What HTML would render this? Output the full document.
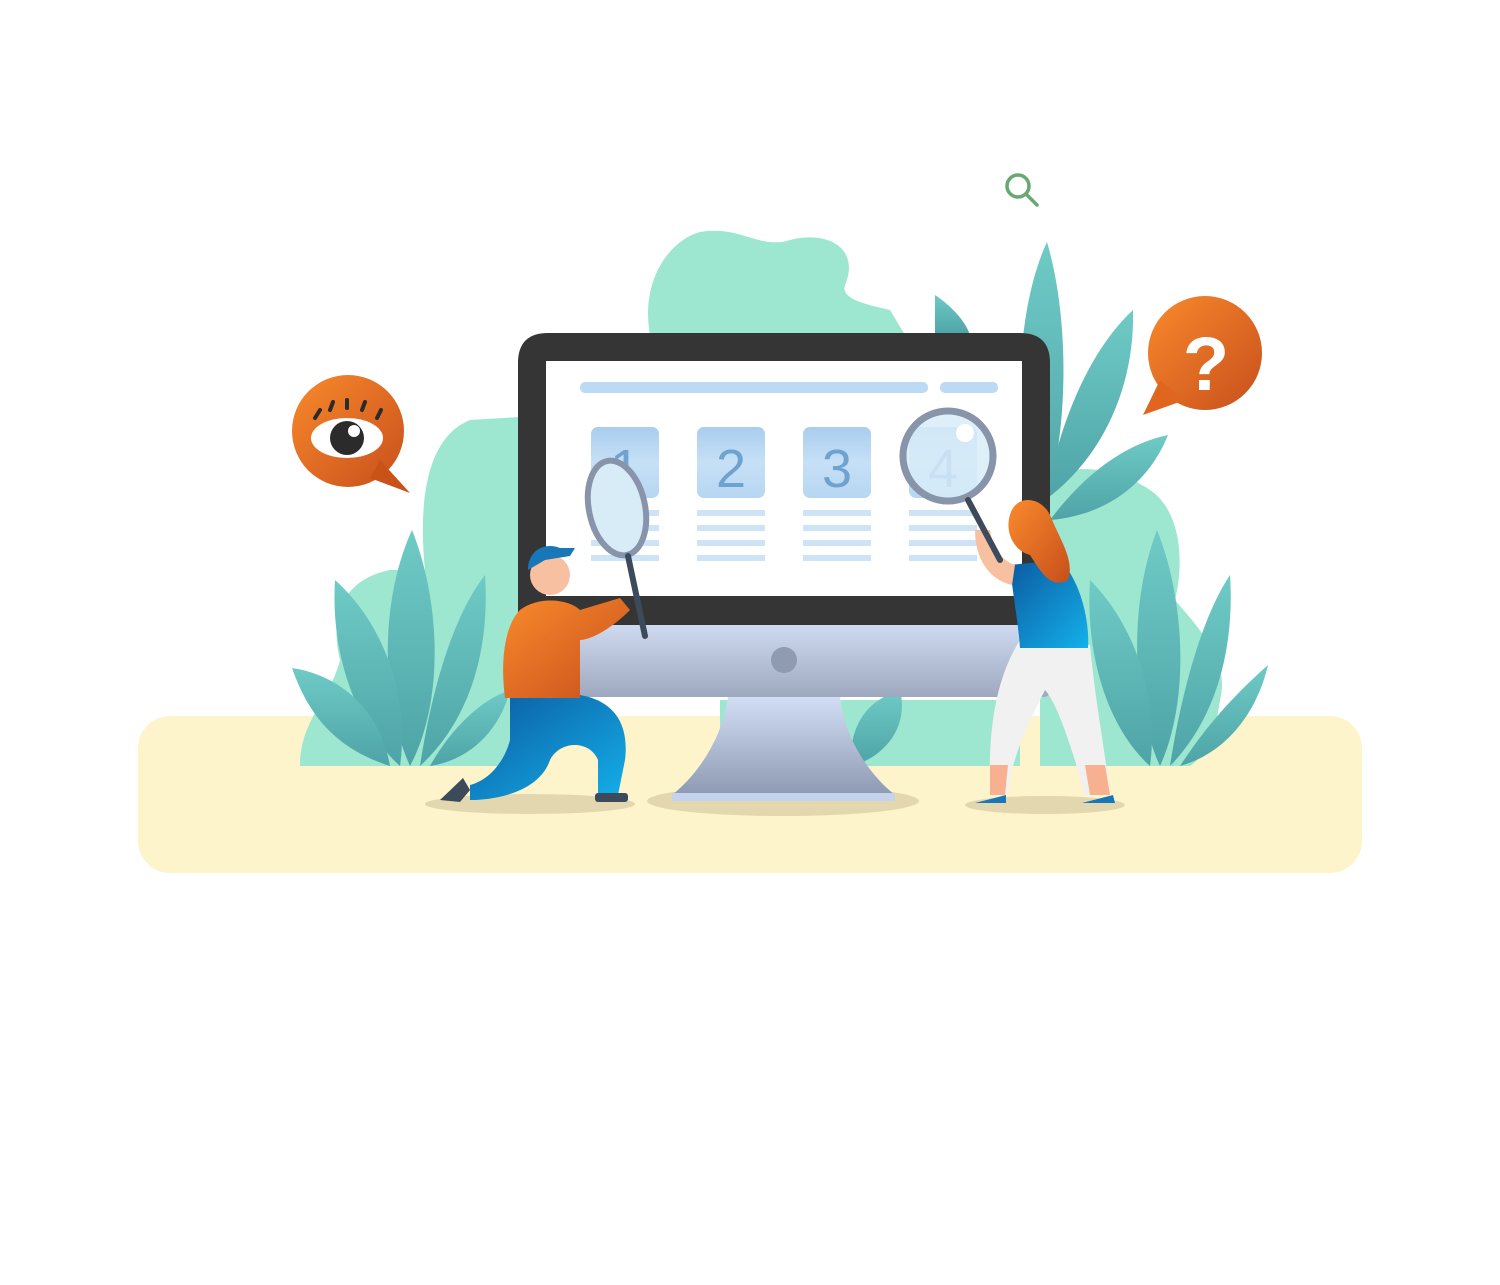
<!DOCTYPE html>
<html><head><meta charset="utf-8"><style>
html,body{margin:0;padding:0;background:#fff;}
svg{display:block;}
</style></head><body>
<svg width="1500" height="1285" viewBox="0 0 1500 1285" xmlns="http://www.w3.org/2000/svg">
<defs>
<linearGradient id="chin" x1="0" y1="0" x2="0" y2="1"><stop offset="0" stop-color="#cfdaf0"/><stop offset="1" stop-color="#9ea9bf"/></linearGradient>
<linearGradient id="stand" x1="0" y1="0" x2="0" y2="1"><stop offset="0" stop-color="#d2def5"/><stop offset="1" stop-color="#8e9ab2"/></linearGradient>
<linearGradient id="org" x1="0" y1="0" x2="1" y2="1"><stop offset="0" stop-color="#f98a2c"/><stop offset="1" stop-color="#c74f1c"/></linearGradient>
<linearGradient id="leaf" x1="0" y1="0" x2="0" y2="1"><stop offset="0" stop-color="#6fcbc6"/><stop offset="1" stop-color="#4ea3a6"/></linearGradient>
<linearGradient id="blue" x1="0" y1="0" x2="1" y2="1"><stop offset="0" stop-color="#0b5aa0"/><stop offset="1" stop-color="#14b0ea"/></linearGradient>
<linearGradient id="card" x1="0" y1="0" x2="0" y2="1"><stop offset="0" stop-color="#a9cdee"/><stop offset="0.5" stop-color="#c6e0f6"/><stop offset="1" stop-color="#b7d6f2"/></linearGradient>
</defs>
<rect x="138" y="716" width="1224" height="157" rx="32" fill="#fdf4cc"/>
<!-- mint blobs -->
<path d="M650 335 C640 280 670 240 700 232 C740 225 760 250 790 240 C830 230 860 250 845 285 C840 300 870 305 890 310 L905 335 Z" fill="#9de6cf"/>
<path d="M300 766 C300 720 330 700 340 660 C330 620 340 580 390 570 L425 570 C420 520 420 440 470 420 L520 417 L520 766 Z" fill="#9de6cf"/>
<path d="M1040 766 L1040 480 C1080 460 1120 470 1150 490 C1180 510 1185 560 1175 600 C1200 630 1230 660 1220 700 C1215 740 1200 760 1190 766 Z" fill="#9de6cf"/>
<path d="M720 766 L720 700 L1020 700 L1020 766 Z" fill="#9de6cf"/>
<!-- leaves left -->
<g fill="url(#leaf)">
<path d="M410 766 C380 700 380 600 412 530 C440 600 445 700 410 766 Z"/>
<path d="M400 766 C360 730 330 660 335 580 C380 620 410 690 400 766 Z"/>
<path d="M420 766 C430 700 450 620 485 575 C490 650 470 720 420 766 Z"/>
<path d="M390 766 C340 750 310 720 292 668 C340 675 380 710 390 766 Z"/>
<path d="M430 766 C450 730 480 700 510 690 C500 730 470 760 430 766 Z"/>
</g>
<!-- leaves right -->
<g fill="url(#leaf)">
<path d="M1160 766 C1130 700 1130 600 1157 530 C1185 600 1190 700 1160 766 Z"/>
<path d="M1150 766 C1110 730 1085 660 1090 580 C1130 620 1160 690 1150 766 Z"/>
<path d="M1170 766 C1180 700 1200 620 1230 575 C1235 650 1215 720 1170 766 Z"/>
<path d="M1180 766 C1210 720 1240 690 1268 665 C1255 720 1220 755 1180 766 Z"/>
<path d="M1040 520 C1010 440 1015 310 1047 242 C1070 320 1070 440 1040 520 Z"/>
<path d="M1045 500 C1060 420 1090 350 1133 310 C1135 390 1100 460 1045 500 Z"/>
<path d="M1050 520 C1080 480 1120 445 1168 435 C1150 480 1110 515 1050 520 Z"/>
<path d="M935 335 L935 295 C950 305 965 320 970 335 Z"/>
<path d="M850 766 C850 720 870 700 900 690 C910 730 880 760 850 766 Z"/>
</g>
<!-- monitor -->
<path d="M548 333 L1020 333 Q1050 333 1050 363 L1050 625 L518 625 L518 363 Q518 333 548 333 Z" fill="#353535"/>
<rect x="546" y="361" width="476" height="235" fill="#fff"/>
<path d="M518 625 L1050 625 L1050 690 Q1050 697 1043 697 L525 697 Q518 697 518 690 Z" fill="url(#chin)"/>
<circle cx="784" cy="660" r="13" fill="#8f9bb1"/>
<ellipse cx="783" cy="801" rx="136" ry="15" fill="#e3d7b0"/>
<path d="M728 697 L840 697 C845 740 870 775 895 795 L672 795 C697 775 722 740 728 697 Z" fill="url(#stand)"/>
<rect x="672" y="793" width="223" height="8" rx="2" fill="#c4d2ec"/>
<!-- screen content -->
<rect x="580" y="382" width="348" height="11" rx="5" fill="#bcdaf3"/>
<rect x="940" y="382" width="58" height="11" rx="5" fill="#bcdaf3"/>
<g font-family="Liberation Sans, sans-serif" font-size="54" fill="#6ea3cf" text-anchor="middle">
<rect x="591" y="427" width="68" height="71" rx="7" fill="url(#card)"/><text x="625" y="487">1</text>
<rect x="697" y="427" width="68" height="71" rx="7" fill="url(#card)"/><text x="731" y="487">2</text>
<rect x="803" y="427" width="68" height="71" rx="7" fill="url(#card)"/><text x="837" y="487">3</text>
<rect x="909" y="427" width="68" height="71" rx="7" fill="url(#card)"/><text x="943" y="487">4</text>
</g>
<g fill="#cfe3f6">
<rect x="591" y="510" width="68" height="6"/><rect x="591" y="525" width="68" height="6"/><rect x="591" y="540" width="68" height="6"/><rect x="591" y="555" width="68" height="6"/>
<rect x="697" y="510" width="68" height="6"/><rect x="697" y="525" width="68" height="6"/><rect x="697" y="540" width="68" height="6"/><rect x="697" y="555" width="68" height="6"/>
<rect x="803" y="510" width="68" height="6"/><rect x="803" y="525" width="68" height="6"/><rect x="803" y="540" width="68" height="6"/><rect x="803" y="555" width="68" height="6"/>
<rect x="909" y="510" width="68" height="6"/><rect x="909" y="525" width="68" height="6"/><rect x="909" y="540" width="68" height="6"/><rect x="909" y="555" width="68" height="6"/>
</g>
<!-- eye bubble -->
<circle cx="348" cy="431" r="56" fill="url(#org)"/>
<path d="M380 460 L410 493 L370 478 Z" fill="#c95218"/>
<ellipse cx="347" cy="438" rx="36" ry="20" fill="#fff"/>
<circle cx="347" cy="438" r="17" fill="#2b2b2b"/>
<circle cx="354" cy="431" r="6" fill="#fff"/>
<g stroke="#2b2b2b" stroke-width="4" stroke-linecap="round">
<line x1="315" y1="418" x2="320" y2="410"/><line x1="330" y1="410" x2="333" y2="402"/><line x1="347" y1="408" x2="347" y2="400"/><line x1="362" y1="410" x2="365" y2="402"/><line x1="377" y1="418" x2="381" y2="410"/>
</g>
<!-- question bubble -->
<circle cx="1205" cy="353" r="57" fill="url(#org)"/>
<path d="M1160 380 L1143 415 L1185 400 Z" fill="#e0661f"/>
<text x="1206" y="390" font-family="Liberation Sans, sans-serif" font-weight="bold" font-size="76" fill="#fff" text-anchor="middle">?</text>
<!-- search icon -->
<circle cx="1018" cy="186" r="11" fill="none" stroke="#6aa872" stroke-width="3.5"/>
<line x1="1026" y1="194" x2="1037" y2="205" stroke="#6aa872" stroke-width="3.5" stroke-linecap="round"/>
<!-- man -->
<ellipse cx="530" cy="804" rx="105" ry="10" fill="#e3d7b0"/>
<path d="M510 695 L580 695 C610 700 630 720 625 760 L618 795 L598 795 L598 760 C590 740 560 740 550 760 C540 790 500 800 470 800 L470 785 C490 780 505 760 510 740 Z" fill="url(#blue)"/>
<path d="M440 800 L463 778 L470 790 L460 802 Z" fill="#3d4a5c"/>
<rect x="595" y="793" width="33" height="9" rx="3" fill="#3d4a5c"/>
<path d="M520 610 C540 595 570 600 580 610 L620 598 L630 610 C610 630 590 640 580 640 L580 698 L505 698 C500 660 505 625 520 610 Z" fill="url(#org)"/>
<circle cx="550" cy="575" r="20" fill="#f7c0a0"/>
<path d="M528 570 C528 550 545 542 560 548 L575 548 L570 556 L545 560 Z" fill="#1877b8"/>
<ellipse cx="617" cy="508" rx="28" ry="48" transform="rotate(-12 617 508)" fill="#d8ecf8" stroke="#8894aa" stroke-width="6"/>
<line x1="628" y1="556" x2="645" y2="636" stroke="#3d4a5c" stroke-width="6" stroke-linecap="round"/>
<!-- woman -->
<ellipse cx="1045" cy="805" rx="80" ry="9" fill="#e3d7b0"/>
<path d="M1020 640 L1090 645 C1095 700 1105 750 1110 795 L1085 795 C1070 740 1055 700 1045 690 C1030 720 1010 760 1008 795 L990 795 C988 730 995 680 1020 640 Z" fill="#f1f1f1"/>
<path d="M990 765 L1008 765 L1005 795 L990 795 Z" fill="#f7b090"/>
<path d="M1085 765 L1105 765 L1110 795 L1090 795 Z" fill="#f7b090"/>
<path d="M975 803 L1006 795 L1006 803 Z" fill="#1877b8"/>
<path d="M1082 803 L1113 795 L1115 803 Z" fill="#1877b8"/>
<path d="M1010 565 L1060 560 C1080 580 1090 620 1088 648 L1020 648 C1018 620 1012 590 1010 565 Z" fill="url(#blue)"/>
<path d="M975 530 C975 560 990 580 1012 585 L1015 565 C1000 560 992 545 990 530 Z" fill="#f7c0a0"/>
<path d="M1010 515 C1015 495 1040 495 1050 515 C1060 540 1075 560 1068 580 C1050 590 1040 570 1030 555 C1012 550 1005 530 1010 515 Z" fill="url(#org)"/>
<circle cx="948" cy="456" r="45" fill="#d8ecf8" fill-opacity="0.85" stroke="#8894aa" stroke-width="7"/>
<circle cx="965" cy="433" r="9" fill="#fff"/>
<line x1="968" y1="500" x2="1000" y2="560" stroke="#3d4a5c" stroke-width="6" stroke-linecap="round"/>
</svg>
</body></html>
